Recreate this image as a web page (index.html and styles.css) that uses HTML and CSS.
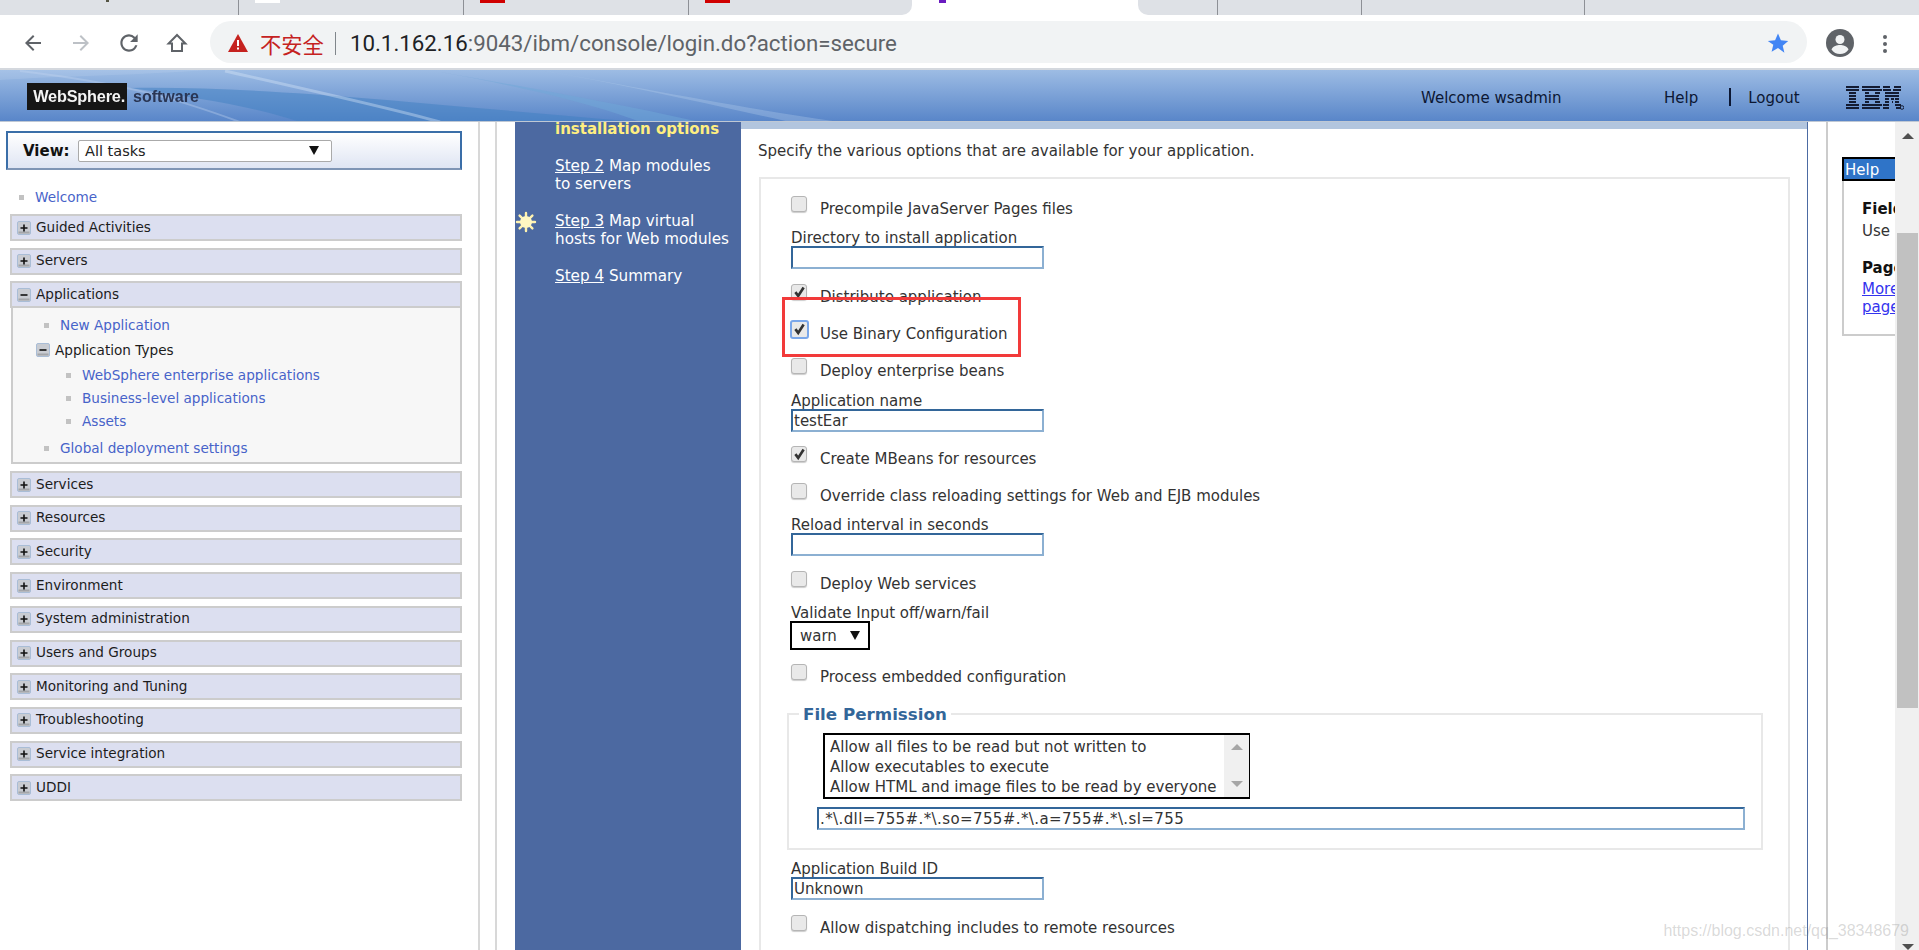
FILE: index.html
```html
<!DOCTYPE html>
<html lang="en">
<head>
<meta charset="utf-8">
<title>WebSphere Integrated Solutions Console</title>
<link rel="stylesheet" href="styles.css">
</head>
<body>
<svg class="defs" width="0" height="0" aria-hidden="true">
  <symbol id="plus" viewBox="0 0 14 14"><rect x=".5" y=".5" width="13" height="13" rx="1.5" fill="#c9ccd2" stroke="#a9bdd6"/><rect x="1.5" y="10.5" width="11" height="2" fill="#a4a6aa"/><path d="M3.5 7h7M7 3.5v7" stroke="#111" stroke-width="1.6"/></symbol>
  <symbol id="minus" viewBox="0 0 14 14"><rect x=".5" y=".5" width="13" height="13" rx="1.5" fill="#c9ccd2" stroke="#a9bdd6"/><rect x="1.5" y="10.5" width="11" height="2" fill="#a4a6aa"/><path d="M3.5 7h7" stroke="#111" stroke-width="1.6"/></symbol>
  <symbol id="tick" viewBox="0 0 16 16"><path d="M3.6 7.6 6.6 11.6 12.4 2.6" fill="none" stroke="#333" stroke-width="2.8"/></symbol>
</svg>

<div class="tabs">
  <div class="tab-group tab-group-left">
    <span class="tab"><i class="bit bit-dark bit-a"></i></span>
    <span class="tab"><i class="bit bit-white"></i></span>
    <span class="tab"><i class="bit bit-red"></i></span>
    <span class="tab tab-last"><i class="bit bit-red"></i></span>
  </div>
  <div class="tab-active"><i class="bit bit-purple"></i></div>
  <div class="tab-group tab-group-right">
    <span class="tab tab-r1"></span>
    <span class="tab tab-r2"></span>
    <span class="tab tab-r3"></span>
  </div>
</div>

<div class="toolbar">
  <span class="tool"><svg viewBox="0 0 24 24" width="24" height="24"><path fill="#5f6368" d="M20 11H7.83l5.59-5.59L12 4l-8 8 8 8 1.41-1.41L7.83 13H20v-2z"/></svg></span>
  <span class="tool"><svg viewBox="0 0 24 24" width="24" height="24"><path fill="#bdc1c6" d="M4 11h12.17l-5.59-5.59L12 4l8 8-8 8-1.41-1.41L16.17 13H4v-2z"/></svg></span>
  <span class="tool"><svg viewBox="0 0 24 24" width="26" height="26"><path fill="#5f6368" d="M17.65 6.35A7.958 7.958 0 0 0 12 4c-4.42 0-7.99 3.58-7.99 8s3.57 8 7.99 8c3.73 0 6.84-2.55 7.73-6h-2.08A5.99 5.99 0 0 1 12 18c-3.31 0-6-2.69-6-6s2.69-6 6-6c1.66 0 3.14.69 4.22 1.78L13 11h7V4l-2.35 2.35z"/></svg></span>
  <span class="tool"><svg viewBox="0 0 24 24" width="24" height="24"><path fill="none" stroke="#5f6368" stroke-width="2" d="M12 4 3.6 12.6H7V20h10v-7.4h3.4z"/></svg></span>
  <div class="omnibox">
    <svg class="warn" viewBox="0 0 20 18" width="20" height="18"><path fill="#c5221f" d="M10 0 20 18H0z"/><path fill="#fff" d="M9 6h2v6H9zM9 13.500h2v2H9z"/></svg>
    <span class="insecure">不安全</span>
    <span class="omni-sep"></span>
    <span class="url"><b class="host">10.1.162.16</b>:9043/ibm/console/login.do?action=secure</span>
    <svg class="star" viewBox="0 0 24 24" width="24" height="24"><path fill="#4285f4" d="M12 2.500l2.900 6.800 7.300.6-5.500 4.800 1.700 7.100L12 17l-6.400 3.800 1.700-7.100L1.800 9.900l7.300-.6z"/></svg>
  </div>
  <svg class="account" viewBox="0 0 28 28" width="28" height="28"><circle cx="14" cy="14" r="14" fill="#5f6368"/><circle cx="14" cy="10.500" r="4.500" fill="#f1f3f4"/><path fill="#f1f3f4" d="M5.500 20.500c1.500-3.500 5.500-4.500 8.500-4.500s7 1 8.500 4.500C20.500 23.500 17.500 25 14 25s-6.500-1.500-8.500-4.500z"/></svg>
  <span class="dots"><i></i><i></i><i></i></span>
</div>

<header class="banner">
  <svg class="swoosh" viewBox="0 0 1000 52" width="1000" height="52" aria-hidden="true">
    <path fill="#3f7fc2" opacity=".5" d="M130 18C270 16 420 34 640 52H300C260 38 200 28 130 18z"/>
    <path fill="#cfe0f5" opacity=".18" d="M0 0H210C120 6 60 6 0 10z"/>
    <path fill="none" stroke="#d6e5f7" stroke-width="3" opacity=".4" d="M225 1C300 18 390 38 440 52"/>
    <path fill="none" stroke="#c5d8f0" stroke-width="2" opacity=".35" d="M20 1C130 14 180 30 240 52"/>
    <path fill="#bcd3ee" opacity=".3" d="M540 0C620 14 740 38 840 52H790C700 32 620 14 540 0z"/>
    <path fill="#6fa8d8" opacity=".5" d="M440 2C520 16 620 34 700 52H640C600 36 520 16 440 2z"/>
  </svg>
  <div class="ws-logo"><span class="ws-name">WebSphere.</span></div>
  <span class="ws-soft">software</span>
  <span class="welcome">Welcome wsadmin</span>
  <a class="head-link head-help">Help</a>
  <span class="head-sep"></span>
  <a class="head-link">Logout</a>
  <svg class="ibm" viewBox="0 0 58 24" width="58" height="24" aria-label="IBM">
    <path fill="#141c33" d="M0 0h13v2H0zM16 0h18v2H16zM37 0h7v2h-7zM48 0h7v2h-7zM0 3h13v2H0zM16 3h20v2H16zM37 3h8v2h-8zM47 3h8v2h-8zM3 6h7v2H3zM19 6h4v2h-4zM29 6h5v2h-5zM39 6h7v2h-7zM46 6h7v2h-7zM3 9h7v2H3zM19 9h14v2H19zM39 9h14v2H39zM3 12h7v2H3zM19 12h14v2H19zM39 12h4v2h-4zM45 12h3v2h-3zM49 12h4v2h-4zM3 15h7v2H3zM19 15h4v2h-4zM29 15h5v2h-5zM39 15h4v2h-4zM46 15h1v2h-1zM49 15h4v2h-4zM0 18h13v2H0zM16 18h20v2H16zM37 18h6v2h-6zM49 18h6v2h-6zM0 21h13v2H0zM16 21h18v2H16zM37 21h6v2h-6zM50 21h5v2h-5z"/>
    <circle cx="56" cy="21.500" r="1.800" fill="none" stroke="#141c33"/>
  </svg>
</header>

<div class="main">
  <nav class="nav">
    <div class="view-box">
      <span class="view-label">View:</span>
      <span class="view-select"><span>All tasks</span><i class="arrow-down"></i></span>
    </div>
    <a class="nav-welcome"><i class="sq"></i>Welcome</a>
    <ul class="nav-list">
      <li class="nav-head"><svg class="pm"><use href="#plus"/></svg><span class="nh-text">Guided Activities</span></li>
      <li class="nav-head"><svg class="pm"><use href="#plus"/></svg><span class="nh-text">Servers</span></li>
      <li class="nav-group">
        <div class="nav-head nav-head-open"><svg class="pm"><use href="#minus"/></svg><span class="nh-text">Applications</span></div>
        <div class="nav-panel">
          <a class="lvl1"><i class="sq"></i>New Application</a>
          <div class="lvl-sub"><svg class="pm"><use href="#minus"/></svg>Application Types</div>
          <a class="lvl2"><i class="sq"></i>WebSphere enterprise applications</a>
          <a class="lvl2"><i class="sq"></i>Business-level applications</a>
          <a class="lvl2"><i class="sq"></i>Assets</a>
          <a class="lvl1 lvl-last"><i class="sq"></i>Global deployment settings</a>
        </div>
      </li>
      <li class="nav-head"><svg class="pm"><use href="#plus"/></svg><span class="nh-text">Services</span></li>
      <li class="nav-head"><svg class="pm"><use href="#plus"/></svg><span class="nh-text">Resources</span></li>
      <li class="nav-head"><svg class="pm"><use href="#plus"/></svg><span class="nh-text">Security</span></li>
      <li class="nav-head"><svg class="pm"><use href="#plus"/></svg><span class="nh-text">Environment</span></li>
      <li class="nav-head"><svg class="pm"><use href="#plus"/></svg><span class="nh-text">System administration</span></li>
      <li class="nav-head"><svg class="pm"><use href="#plus"/></svg><span class="nh-text">Users and Groups</span></li>
      <li class="nav-head"><svg class="pm"><use href="#plus"/></svg><span class="nh-text">Monitoring and Tuning</span></li>
      <li class="nav-head"><svg class="pm"><use href="#plus"/></svg><span class="nh-text">Troubleshooting</span></li>
      <li class="nav-head"><svg class="pm"><use href="#plus"/></svg><span class="nh-text">Service integration</span></li>
      <li class="nav-head"><svg class="pm"><use href="#plus"/></svg><span class="nh-text">UDDI</span></li>
    </ul>
  </nav>

  <section class="content">
    <div class="wizard">
      <aside class="steps">
        <div class="step step-now">installation options</div>
        <div class="step"><u>Step 2</u> Map modules<br>to servers</div>
        <div class="step">
          <svg class="sun" viewBox="0 0 22 22" width="22" height="22"><g stroke="#fff3b0" stroke-width="2.400" stroke-linecap="round"><path d="M11 2v18M2 11h18M4.600 4.600l12.800 12.800M17.400 4.600 4.600 17.400"/></g><circle cx="11" cy="11" r="6" fill="#fff7c2"/></svg>
          <u>Step 3</u> Map virtual<br>hosts for Web modules
        </div>
        <div class="step"><u>Step 4</u> Summary</div>
      </aside>
      <div class="pane">
        <div class="strip"></div>
        <p class="intro">Specify the various options that are available for your application.</p>
        <div class="options">
          <div class="opt opt-first"><span class="cb"></span><span class="opt-label">Precompile JavaServer Pages files</span></div>
          <div class="field"><label class="field-label">Directory to install application</label><div class="input"></div></div>
          <div class="opt"><span class="cb"><svg><use href="#tick"/></svg></span><span class="opt-label">Distribute application</span></div>
          <div class="opt"><span class="cb cb-focus"><svg><use href="#tick"/></svg></span><span class="opt-label">Use Binary Configuration</span></div>
          <div class="opt"><span class="cb"></span><span class="opt-label">Deploy enterprise beans</span></div>
          <div class="field"><label class="field-label">Application name</label><div class="input">testEar</div></div>
          <div class="opt"><span class="cb"><svg><use href="#tick"/></svg></span><span class="opt-label">Create MBeans for resources</span></div>
          <div class="opt"><span class="cb"></span><span class="opt-label">Override class reloading settings for Web and EJB modules</span></div>
          <div class="field field-reload"><label class="field-label">Reload interval in seconds</label><div class="input"></div></div>
          <div class="opt"><span class="cb"></span><span class="opt-label">Deploy Web services</span></div>
          <div class="field field-select"><label class="field-label">Validate Input off/warn/fail</label><div class="mini-select">warn<i class="arrow-down"></i></div></div>
          <div class="opt"><span class="cb"></span><span class="opt-label">Process embedded configuration</span></div>
          <fieldset class="perm">
            <legend>File Permission</legend>
            <div class="listbox">
              <div class="list-items">
                <div>Allow all files to be read but not written to</div>
                <div>Allow executables to execute</div>
                <div>Allow HTML and image files to be read by everyone</div>
              </div>
              <div class="list-scroll"><i class="arrow-up-g"></i><i class="arrow-down-g"></i></div>
            </div>
            <div class="input input-wide">.*\.dll=755#.*\.so=755#.*\.a=755#.*\.sl=755</div>
          </fieldset>
          <div class="field field-build"><label class="field-label">Application Build ID</label><div class="input">Unknown</div></div>
          <div class="opt"><span class="cb"></span><span class="opt-label">Allow dispatching includes to remote resources</span></div>
          <div class="redbox"></div>
        </div>
      </div>
    </div>
    <aside class="help-frame">
      <div class="help">
        <div class="help-title">Help</div>
        <div class="help-body">
          <div class="help-h">Field</div>
          <div class="help-t">Use</div>
          <div class="help-h help-h2">Page</div>
          <a class="help-a">More</a>
          <a class="help-a">page</a>
        </div>
      </div>
    </aside>
    <div class="vscroll">
      <i class="sb-up"></i>
      <div class="sb-thumb"></div>
      <i class="sb-down"></i>
    </div>
  </section>
</div>
<div class="watermark">https://blog.csdn.net/qq_38348679</div>
</body>
</html>
```
FILE: styles.css
```css
* { box-sizing: border-box; }
html, body { margin: 0; padding: 0; }
body { width: 1919px; height: 950px; overflow: hidden; position: relative; background: #fff; font-family: "DejaVu Sans", sans-serif; font-size: 13.600px; color: #222; }
.defs { position: absolute; }
i { display: block; }
ul { list-style: none; margin: 0; padding: 0; }

/* browser chrome */
.tabs { height: 15px; display: flex; background: #fff; }
.tab-group { display: flex; height: 15px; background: #dee1e6; position: relative; }
.tab-group-left { width: 912px; border-bottom-right-radius: 10px; }
.tab-group-right { flex: 1; border-bottom-left-radius: 10px; }
.tab { width: 225px; height: 15px; border-right: 1px solid #8d9096; position: relative; flex: none; }
.tab:first-child { width: 239px; }
.tab-last { border-right: 0; }
.tab-r2 { width: 144px; }
.tab-r3 { width: 223px; }
.tab-group-right .tab:first-child { width: 80px; }
.tab-active { width: 226px; background: #fff; position: relative; }
.bit { position: absolute; top: 0; height: 2px; }
.bit-a { left: 106px; width: 3px; background: #554; }
.bit-white { left: 16px; width: 25px; height: 3px; background: #fff; }
.bit-red { left: 16px; width: 25px; height: 3px; background: #d00000; }
.bit-purple { left: 27px; width: 7px; height: 3px; background: #6a1bc0; }

.toolbar { height: 55px; padding: 6px 0 0 9px; display: flex; align-items: flex-start; background: #fff; border-bottom: 2px solid #d4d8de; }
.tool { width: 48px; height: 44px; display: flex; align-items: center; justify-content: center; flex: none; }
.omnibox { width: 1597px; height: 42px; margin-left: 9px; padding: 2px 17px 0 18px; border-radius: 21px; background: #f1f3f4; display: flex; align-items: center; flex: none; }
.warn { flex: none; }
.insecure { margin-left: 12px; font: 21.300px "Noto Sans CJK SC", sans-serif; color: #c5221f; }
.omni-sep { width: 1px; height: 23px; margin: 0 14px 0 11px; background: #80868b; }
.url { flex: 1; font: 22.300px Roboto, sans-serif; color: #5f6368; white-space: nowrap; }
.host { font-weight: 400; color: #202124; }
.star { flex: none; }
.account { flex: none; margin: 8px 0 0 19px; }
.dots { margin-left: 29px; padding-top: 14px; display: flex; flex-direction: column; gap: 3px; }
.dots i { width: 4px; height: 4px; border-radius: 2px; background: #5f6368; }

/* banner */
.banner { height: 52px; position: relative; overflow: hidden; display: flex; align-items: center; padding-left: 27px; background: linear-gradient(#9dbce4, #5986c9); border-bottom: 1px solid #bfc8d4; color: #0c1733; }
.swoosh { position: absolute; left: 0; top: 0; }
.ws-logo { position: relative; width: 100px; height: 27px; margin-top: 2px; background: #161616; display: flex; align-items: center; justify-content: flex-end; padding-right: 2px; flex: none; }
.ws-name { font: bold 16.300px "Liberation Sans", sans-serif; color: #f4f4f4; letter-spacing: -.2px; filter: blur(.4px); }
.ws-soft { position: relative; margin: 3px 0 0 6px; width: 1288px; font: bold 16px "Liberation Sans", sans-serif; color: #2a3654; filter: blur(.4px); }
.welcome { position: relative; width: 243px; margin-top: 4px; font-size: 15px; }
.head-link { position: relative; margin-top: 4px; font-size: 15px; }
.head-help { margin-right: 31px; }
.head-sep { position: relative; width: 2px; height: 18px; margin: 2px 17px 0 0; background: #0c1733; }
.ibm { position: relative; margin-left: 46px; margin-top: 5px; flex: none; }

/* main split */
.main { height: 828px; display: flex; overflow: hidden; }
.nav { width: 480px; flex: none; padding: 9px 16px 0 0; border-right: 2px solid #d8d8d8; }
.view-box { margin-left: 6px; height: 39px; display: flex; align-items: center; padding-left: 15px; border: 2px solid #3a6ea8; border-bottom-color: #7f95b5; background: linear-gradient(#fff, #dfe5f3); }
.view-label { width: 55px; font-size: 15px; font-weight: bold; color: #111; }
.view-select { width: 254px; height: 22px; padding: 0 12px 0 6px; display: flex; align-items: center; justify-content: space-between; background: #fff; border: 1px solid #aaa; border-radius: 2px; font-size: 14.500px; }
.arrow-down { width: 0; height: 0; border-left: 5px solid transparent; border-right: 5px solid transparent; border-top: 9px solid #111; }
.sq { position: absolute; width: 5px; height: 5px; background: #c2c2c2; top: 50%; margin-top: -2px; }
.nav a { color: #4763c9; display: block; position: relative; }
.nav-welcome { margin: 19px 0 9px 35px; height: 16px; line-height: 16px; }
.nav-welcome .sq { left: -16px; }
.nav-list { margin-left: 10px; }
.nav-head { height: 27px; margin-bottom: 6.700px; display: flex; align-items: center; padding-left: 5px; background: #dcdff0; border: 2px solid #ccc; color: #1c1c1c; }
.nh-text { margin-top: -2px; }
.pm { width: 14px; height: 14px; flex: none; margin-right: 5px; }
.nav-group { margin-bottom: 6.700px; }
.nav-head-open { margin-bottom: 0; }
.nav-panel { margin-left: 1px; margin-top: -1px; height: 157px; padding-top: 5.500px; border: 2px solid #ccc; border-top-width: 1px; background: #f7f7f7; }
.nav-panel a { height: 23px; line-height: 23px; }
.nav-panel .lvl1 { margin-left: 47px; }
.nav-panel .lvl1 .sq { left: -16px; }
.lvl-sub { height: 27px; margin-left: 23px; display: flex; align-items: center; color: #1c1c1c; }
.nav-panel .lvl2 { margin-left: 69px; }
.nav-panel .lvl2 .sq { left: -16px; }
.nav-panel .lvl-last { margin-top: 4px; }

/* content */
.content { flex: 1; display: flex; margin-left: 15px; padding-left: 18px; border-left: 2px solid #d8d8d8; min-width: 0; }
.wizard { width: 1293px; flex: none; display: flex; border-right: 1px solid #4c6ba3; }
.steps { width: 226px; flex: none; padding: 0 0 0 40px; background: #4c69a1; color: #fff; font-size: 15.200px; line-height: 18px; position: relative; overflow: hidden; white-space: nowrap; }
.step { margin-top: 19px; position: relative; }
.step-now { margin-top: -2px; font-size: 15px; font-weight: bold; color: #ffee80; }
.sun { position: absolute; left: -40px; top: -1px; filter: blur(.4px); }
.pane { flex: 1; min-width: 0; padding-right: 17px; }
.strip { height: 7px; margin-right: -17px; background: #b2c5de; }
.intro { margin: 14px 0 18px 17px; height: 16px; line-height: 16px; font-size: 15px; color: #333; white-space: nowrap; }
.options { position: relative; margin-left: 18px; height: 900px; padding: 16px 0 0 30px; border: 2px solid #e8e8e8; font-size: 15px; color: #333; }
.opt { height: 37px; display: flex; align-items: flex-start; }
.opt-first { height: 36px; }
.cb { width: 16px; height: 16px; margin-top: 1px; flex: none; position: relative; background: #e9e9e9; border: 1px solid #b5b5b5; border-radius: 3px; box-shadow: 0 1px 1px #ccc; }
.cb svg { position: absolute; left: 0; top: 0; width: 15px; height: 15px; }
.cb-focus { border: 2px solid #7aa7ea; box-shadow: none; width: 19px; height: 19px; margin: 0 -2px 0 -1px; }
.opt-label { margin: 6px 0 0 13px; height: 16px; line-height: 16px; white-space: nowrap; }
.field { margin-top: -1px; margin-bottom: 13.500px; }
.field-reload { margin-top: -2px; }
.field-label { display: block; height: 16px; line-height: 16px; white-space: nowrap; }
.input { width: 253px; height: 23px; padding-left: 1px; line-height: 20px; background: #fff; border: 2px solid #8cb0d2; border-top-color: #336699; border-left-color: #336699; white-space: nowrap; }
.field-select { margin-top: -1.500px; margin-bottom: 13px; }
.mini-select { width: 80px; height: 29px; padding: 0 8px 0 8px; margin-left: -1px; display: flex; align-items: center; justify-content: space-between; border: 2px solid #000; }
.perm { margin: 4px 25px 11px -4px; padding: 0 0 18px 0; min-width: 0; border: 2px solid #e8e8e8; }
.perm legend { margin-left: 10px; padding: 0 4px; height: 20px; line-height: 21px; font-size: 16.700px; font-weight: bold; color: #336699; }
.listbox { width: 427px; height: 66px; margin: 9px 0 0 34px; display: flex; border: 2px solid #000; border-right-width: 1px; }
.list-items { flex: 1; padding: 2px 0 0 5px; line-height: 20px; white-space: nowrap; overflow: hidden; }
.list-scroll { width: 25px; flex: none; padding: 9px 0 10px; display: flex; flex-direction: column; align-items: center; justify-content: space-between; background: #f0f0f0; }
.arrow-up-g { width: 0; height: 0; border-left: 6px solid transparent; border-right: 6px solid transparent; border-bottom: 6px solid #a6a6a6; }
.arrow-down-g { width: 0; height: 0; border-left: 6px solid transparent; border-right: 6px solid transparent; border-top: 6px solid #a6a6a6; }
.input-wide { width: 928px; margin: 8px 0 0 28px; letter-spacing: .4px; }
.field-build { margin-top: 0; margin-bottom: 14px; }
.redbox { position: absolute; left: 21px; top: 118px; width: 239px; height: 60px; border: 3px solid #f23a3a; }

/* help frame */
.help-frame { width: 69px; margin-left: 18px; padding: 35px 0 0 14px; border-left: 2px solid #ccc; flex: none; overflow: hidden; }
.help { width: 300px; height: 179px; border: 2px solid #ccc; border-top: 0; }
.help-title { height: 24px; margin: 0 0 0 -2px; padding-left: 1px; line-height: 22px; background: #2f74c8; color: #fff; border: 2px solid #000; border-width: 2px 0 2px 2px; font-size: 15px; }
.help-body { padding: 19px 0 0 18px; font-size: 15px; line-height: 19px; white-space: nowrap; }
.help-h { font-weight: bold; color: #111; }
.help-t { margin-top: 3px; color: #333; }
.help-h2 { margin-top: 18px; }
.help-a { display: block; color: #3333ee; text-decoration: underline; margin-top: 2px; }
.help-a + .help-a { margin-top: -1px; }
.vscroll { width: 24px; flex: none; padding: 11px 0 0 1px; background: #f0f0f0; display: flex; flex-direction: column; align-items: center; }
.sb-up { width: 0; height: 0; border-left: 6px solid transparent; border-right: 6px solid transparent; border-bottom: 6px solid #505050; }
.sb-thumb { width: 21px; height: 475px; margin-top: 94px; background: #c1c1c1; }
.sb-down { width: 0; height: 0; margin-top: 236px; border-left: 6px solid transparent; border-right: 6px solid transparent; border-top: 6px solid #505050; }

.watermark { position: absolute; right: 10px; top: 922px; font: 16px "Liberation Sans", sans-serif; color: rgba(130,130,130,.3); white-space: nowrap; }
```
